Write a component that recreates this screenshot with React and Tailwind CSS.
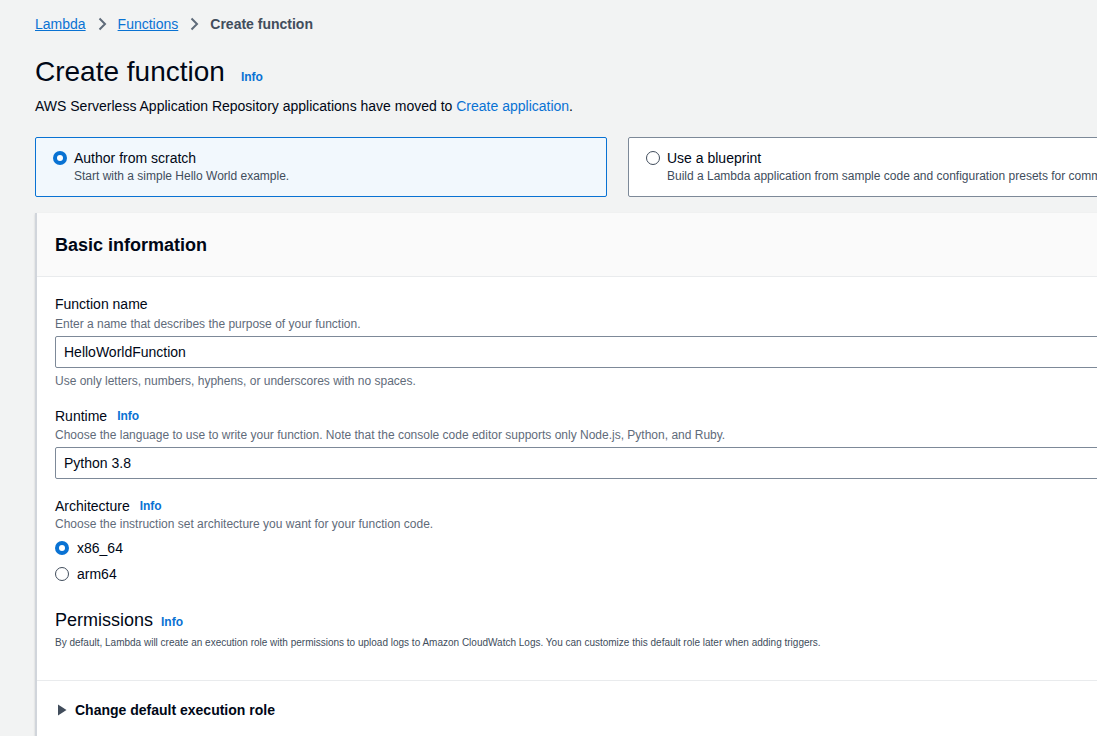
import React from 'react';

const Info = ({ className = '' }) => (
  <span className={`text-xs font-bold text-[#0972d3] ${className}`}>Info</span>
);

const Radio = ({ checked }) =>
  checked ? (
    <span className="grid h-[14px] w-[14px] shrink-0 place-items-center rounded-full bg-[#0972d3]">
      <span className="block h-[6px] w-[6px] rounded-full bg-white" />
    </span>
  ) : (
    <span className="block h-[14px] w-[14px] shrink-0 rounded-full border-[1.5px] border-[#414d5c] bg-white" />
  );

const Chevron = () => (
  <svg width="16" height="16" viewBox="0 0 16 16" className="mx-[8px]">
    <path d="M5.5 2.5 11 8l-5.5 5.5" fill="none" stroke="#5f6b7a" strokeWidth="2" />
  </svg>
);

const Field = ({ label, info, desc, descClass = '', children, className = '' }) => (
  <div className={className}>
    <div className="flex items-center text-sm leading-5 text-[#000716]">
      {label}
      {info && <Info className="ml-[10px]" />}
    </div>
    <div className={`text-xs leading-4 text-[#5f6b7a] ${descClass}`}>{desc}</div>
    {children}
  </div>
);

export default function App() {
  return (
    <div
      className="h-[736px] w-full overflow-hidden bg-[#f2f3f3] text-[#000716]"
      style={{ fontFamily: '"Liberation Sans", Arial, sans-serif' }}
    >
      <div className="w-[1200px] pl-[35px]">
        <nav className="flex h-[48px] items-center text-sm">
          <span className="text-[#0972d3] underline">Lambda</span>
          <Chevron />
          <span className="text-[#0972d3] underline">Functions</span>
          <Chevron />
          <span className="font-bold text-[#414d5c]">Create function</span>
        </nav>

        <div className="mt-[6px] flex items-baseline">
          <h1 className="text-[28px] leading-9 font-normal">Create function</h1>
          <Info className="ml-4" />
        </div>
        <p className="mt-[6px] text-sm leading-5">
          AWS Serverless Application Repository applications have moved to{' '}
          <span className="text-[#0972d3]">Create application</span>.
        </p>

        <div className="mt-[21px] flex gap-[21px]">
          <div className="flex h-[60px] w-[573px] gap-[7px] rounded-[2px] border border-[#0972d3] bg-[#f2f8fd] px-[17px] pt-[10px]">
            <div className="pt-[3px]">
              <Radio checked />
            </div>
            <div>
              <div className="text-sm leading-5">Author from scratch</div>
              <div className="text-xs leading-4 text-[#414d5c]">Start with a simple Hello World example.</div>
            </div>
          </div>
          <div className="flex h-[60px] w-[573px] gap-[7px] rounded-[2px] border border-[#7d8998] bg-white px-[17px] pt-[10px]">
            <div className="pt-[3px]">
              <Radio />
            </div>
            <div className="min-w-0">
              <div className="text-sm leading-5">Use a blueprint</div>
              <div className="text-xs leading-4 text-[#414d5c]">
                Build a Lambda application from sample code and configuration presets for common use cases.
              </div>
            </div>
          </div>
        </div>

        <section className="mt-[16px] w-[1167px] border-l-2 border-[#d1d5db] bg-white shadow-[0_1px_2px_rgba(0,7,22,0.15)]">
          <div className="flex h-[64px] items-center border-b border-[#e9ebed] bg-[#fafafa] px-[18px]">
            <h2 className="text-lg font-bold">Basic information</h2>
          </div>

          <div className="px-[18px] pt-[17px]">
            <Field
              label="Function name"
              descClass="mt-[2px]"
              desc="Enter a name that describes the purpose of your function."
            >
              <div className="mt-[4px] flex h-[32px] items-center rounded-[2px] border border-[#7d8998] px-[8px] text-sm">
                HelloWorldFunction
              </div>
              <div className="mt-[5px] text-xs leading-4 text-[#5f6b7a]">
                Use only letters, numbers, hyphens, or underscores with no spaces.
              </div>
            </Field>

            <Field
              className="mt-[17px]"
              label="Runtime"
              info
              descClass="mt-[1px]"
              desc="Choose the language to use to write your function. Note that the console code editor supports only Node.js, Python, and Ruby."
            >
              <div className="mt-[4px] flex h-[32px] items-center rounded-[2px] border border-[#7d8998] px-[8px] text-sm">
                Python 3.8
              </div>
            </Field>

            <Field
              className="mt-[17px]"
              label="Architecture"
              info
              desc="Choose the instruction set architecture you want for your function code."
            >
              <div className="mt-[6px] flex flex-col gap-[6px] text-sm">
                <label className="flex h-5 items-center gap-[8px]">
                  <Radio checked />
                  x86_64
                </label>
                <label className="flex h-5 items-center gap-[8px]">
                  <Radio />
                  arm64
                </label>
              </div>
            </Field>

            <div className="mt-[24px] flex items-baseline">
              <h3 className="text-lg leading-6 font-normal">Permissions</h3>
              <Info className="ml-[8px]" />
            </div>
            <p className="mt-[3px] pb-[29px] text-[10px] leading-4 text-[#414d5c]">
              By default, Lambda will create an execution role with permissions to upload logs to Amazon CloudWatch Logs.
              You can customize this default role later when adding triggers.
            </p>
          </div>

          <div className="flex h-[58px] items-center gap-[8px] border-t border-[#e9ebed] px-[20px] text-sm font-bold text-[#000716]">
            <svg width="10" height="12" viewBox="0 0 10 12">
              <path d="M1 0.5 9.5 6 1 11.5Z" fill="#414d5c" />
            </svg>
            Change default execution role
          </div>
        </section>
      </div>
    </div>
  );
}
